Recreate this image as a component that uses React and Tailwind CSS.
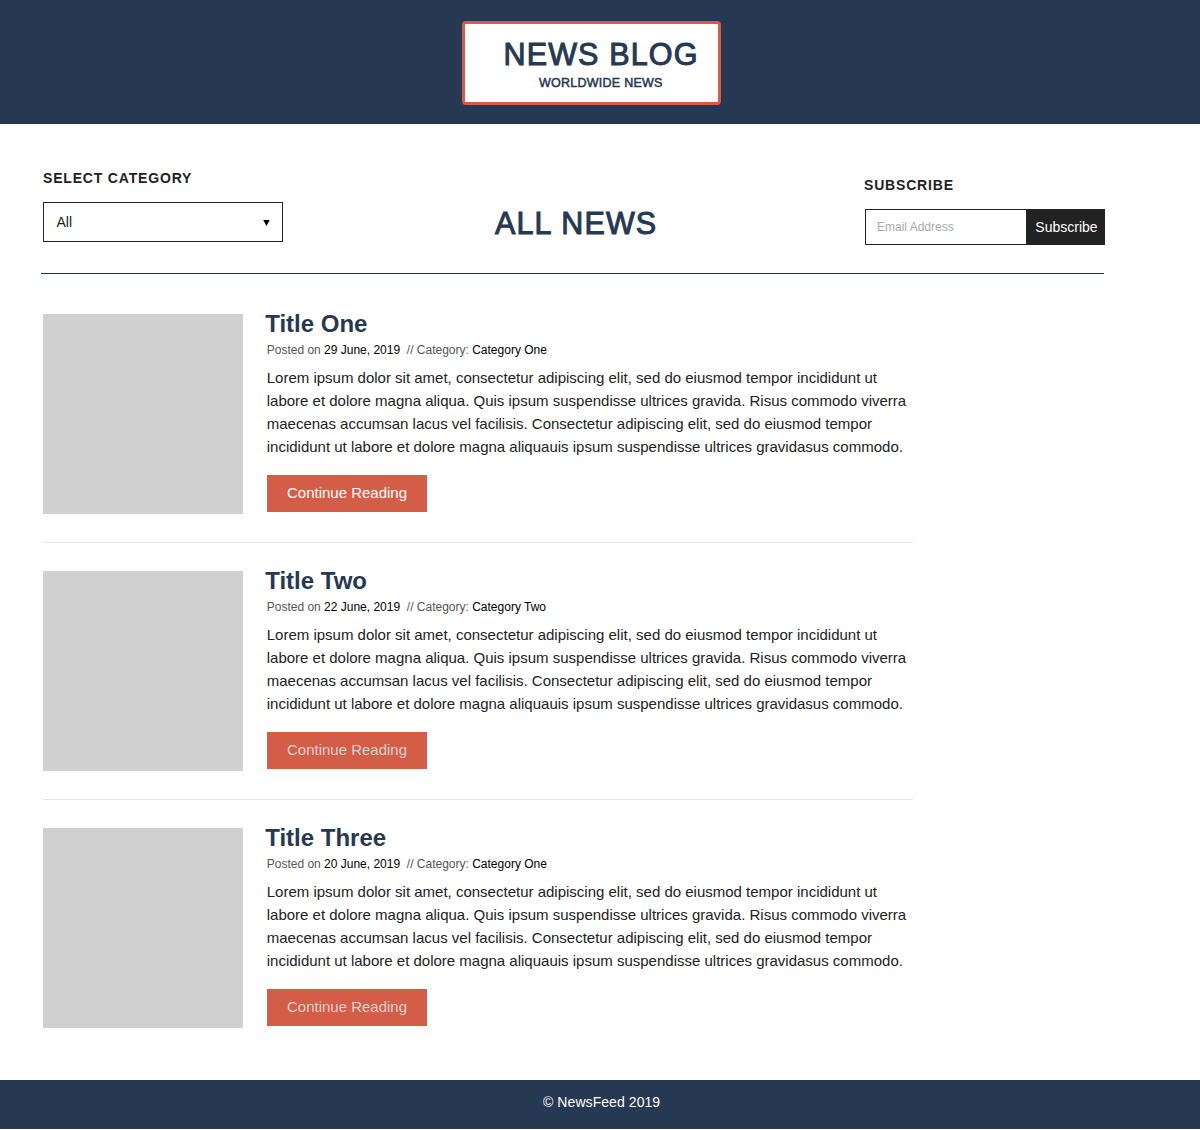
const posts = [
  { title: "Title One", date: "29 June, 2019", category: "Category One", button: "text-white" },
  { title: "Title Two", date: "22 June, 2019", category: "Category Two", button: "text-[#d2d2d2]" },
  { title: "Title Three", date: "20 June, 2019", category: "Category One", button: "text-[#d2d2d2]" },
];

const excerpt = [
  "Lorem ipsum dolor sit amet, consectetur adipiscing elit, sed do eiusmod tempor incididunt ut",
  "labore et dolore magna aliqua. Quis ipsum suspendisse ultrices gravida. Risus commodo viverra",
  "maecenas accumsan lacus vel facilisis. Consectetur adipiscing elit, sed do eiusmod tempor",
  "incididunt ut labore et dolore magna aliquauis ipsum suspendisse ultrices gravidasus commodo.",
];

function Post({ post, last }) {
  return (
    <article className={last ? "flex h-[200px]" : "flex h-[229px] border-b border-[#e8e8e8]"}>
      <div className="size-[200px] shrink-0 bg-[#d0d0d0]" />
      <div className="ml-6 whitespace-nowrap">
        <h2 className="-mt-[4px] -ml-[1.8px] text-2xl leading-7 font-bold text-[#263852]">{post.title}</h2>
        <p className="mt-1 -ml-[0.3px] text-xs leading-4 text-[#555]">
          Posted on <span className="text-black">{post.date}</span>&nbsp; // Category: <span className="text-black">{post.category}</span>
        </p>
        <p className="mt-2 -ml-[0.3px] text-[15px] leading-[23px] text-[#222]">
          {excerpt.map((line) => (
            <span key={line} className="block">{line}</span>
          ))}
        </p>
        <button className={`mt-[17px] flex h-[37px] w-40 items-center justify-center bg-[#d45d47] text-[15px] ${post.button}`}>
          Continue Reading
        </button>
      </div>
    </article>
  );
}

export default function App() {
  return (
    <div className="h-[1130px] overflow-hidden bg-white font-['Liberation_Sans',Arial,sans-serif] text-[#222]">
      <header className="h-[124px] bg-[#263852] pt-[21px]">
        <div className="ml-[462px] h-[84px] w-[259px] rounded border-3 border-[#d45d47] bg-white pt-[12px] whitespace-nowrap text-[#263852]">
          <h1 className="ml-[38.5px] text-[30.5px] leading-9 tracking-[1.15px] [-webkit-text-stroke:1px_#263852]">NEWS BLOG</h1>
          <p className="mt-[2px] ml-[74px] text-[12.5px] leading-[18px] tracking-[0.25px] [-webkit-text-stroke:0.5px_#263852]">WORLDWIDE NEWS</p>
        </div>
      </header>
      <main className="h-[956px] pl-[43px]">
        <section className="-ml-[2px] flex h-[150px] w-[1063px] border-b border-[#263340] pl-[2px] whitespace-nowrap">
          <div className="w-[452px] shrink-0 pt-[46px]">
            <h3 className="text-sm leading-4 font-bold tracking-[0.82px]">SELECT CATEGORY</h3>
            <div className="mt-4 flex h-10 w-60 items-center justify-between border border-[#222] px-[13px] text-sm">
              <span className="-ml-[0.5px]">All</span>
              <svg className="mt-[1px] -mr-[1px] h-[6px] w-[7px]" viewBox="0 0 7 6"><path d="M0.3 0h6.4L3.5 6z" fill="#000" /></svg>
            </div>
          </div>
          <h1 className="w-[369px] shrink-0 pt-[81px] text-[30.5px] leading-9 tracking-[1.15px] text-[#263852] [-webkit-text-stroke:1px_#263852]">ALL NEWS</h1>
          <div className="w-[241px] shrink-0 pt-[53px]">
            <h3 className="text-sm leading-4 font-bold tracking-[0.82px]">SUBSCRIBE</h3>
            <div className="mt-4 ml-[1px] flex h-9 w-60">
              <input className="w-[161px] border border-r-0 border-[#222] px-[11px] text-xs placeholder:text-[#aaa]" placeholder="Email Address" />
              <button className="w-[79px] bg-[#222] pl-[2px] text-sm text-white">Subscribe</button>
            </div>
          </div>
        </section>
        <section className="mt-10 flex w-[870px] flex-col gap-7">
          {posts.map((post, i) => (
            <Post key={post.title} post={post} last={i === 2} />
          ))}
        </section>
      </main>
      <footer className="h-[49px] bg-[#263852] pt-[14px] pl-[543px] text-sm leading-4 tracking-[0.07px] text-white">© NewsFeed 2019</footer>
    </div>
  );
}
